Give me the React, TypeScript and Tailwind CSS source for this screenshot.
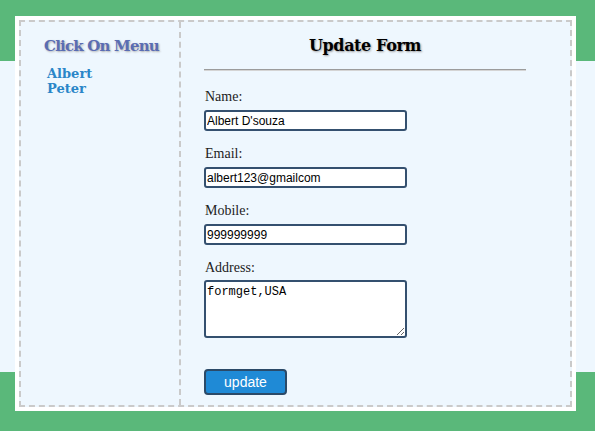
export default function App() {
  const serif = "font-['DejaVu_Serif','Liberation_Serif',serif]";
  const label = "pl-[1px] text-[14px] leading-[22px] text-[#222] font-['Liberation_Serif','DejaVu_Serif',serif]";
  const fields = [
    { label: "Name:", value: "Albert D'souza" },
    { label: "Email:", value: "albert123@gmailcom" },
    { label: "Mobile:", value: "999999999" },
  ];
  return (
    <div className="w-[595px] h-[431px] pt-[16px] pl-[15px] bg-[linear-gradient(to_bottom,#5ab87a_61px,#eef7fe_61px,#eef7fe_372px,#5ab87a_372px)]">
      <div className="w-[561px] h-[395px] bg-white p-[4px]">
        <div className="flex h-full border-2 border-dashed border-[#cacaca] bg-[#eef7fe]">
          {/* sidebar */}
          <div className={`w-[160px] border-r-2 border-dashed border-[#cacaca] pl-[23px] pt-[13px] ${serif}`}>
            <h2 className="text-[15px] font-bold tracking-[-0.8px] text-[#5a6db3] [text-shadow:1px_1px_2px_#b0b0b0]">Click On Menu</h2>
            <ul className="mt-[8px] pl-[3px] text-[13px] font-bold leading-[15px] text-[#2a86c8]">
              <li>Albert</li>
              <li>Peter</li>
            </ul>
          </div>
          {/* form */}
          <div className={`flex-1 pl-[23px] pt-[12px] ${serif}`}>
            <div className="w-[322px]">
              <h1 className="text-center text-[16px] font-bold leading-[24px] tracking-[-0.4px] text-black [text-shadow:1px_1px_2px_#9a9a9a]">Update Form</h1>
              <div className="mt-[11px] h-[2px] border-t border-[#9c9c9c] bg-[#d4d4d4]" />
              <div className="mt-[15px] flex flex-col">
                {fields.map((f) => (
                  <div key={f.label} className="mb-[12px]">
                    <div className={label}>{f.label}</div>
                    <input
                      readOnly
                      value={f.value}
                      className="mt-[2px] block w-[203px] h-[21px] border-2 border-[#34506f] rounded-[3px] bg-white px-[1px] text-[12px] text-black font-['Liberation_Sans',Arial,sans-serif] outline-none"
                    />
                  </div>
                ))}
                <div>
                  <div className={label}>Address:</div>
                  <textarea
                    readOnly
                    value="formget,USA"
                    className="mt-[1px] block w-[203px] h-[58px] border-2 border-[#34506f] rounded-[3px] bg-white px-[1px] pt-[3px] text-[12px] leading-[14px] text-black font-['Liberation_Mono','Courier_New',monospace] outline-none"
                  />
                </div>
                <button className="mt-[31px] w-[83px] h-[26px] rounded-[4px] border-2 border-[#2b4a68] bg-[#1f8ad6] text-[14px] text-white font-['Liberation_Sans',Arial,sans-serif]">
                  update
                </button>
              </div>
            </div>
          </div>
        </div>
      </div>
    </div>
  );
}
